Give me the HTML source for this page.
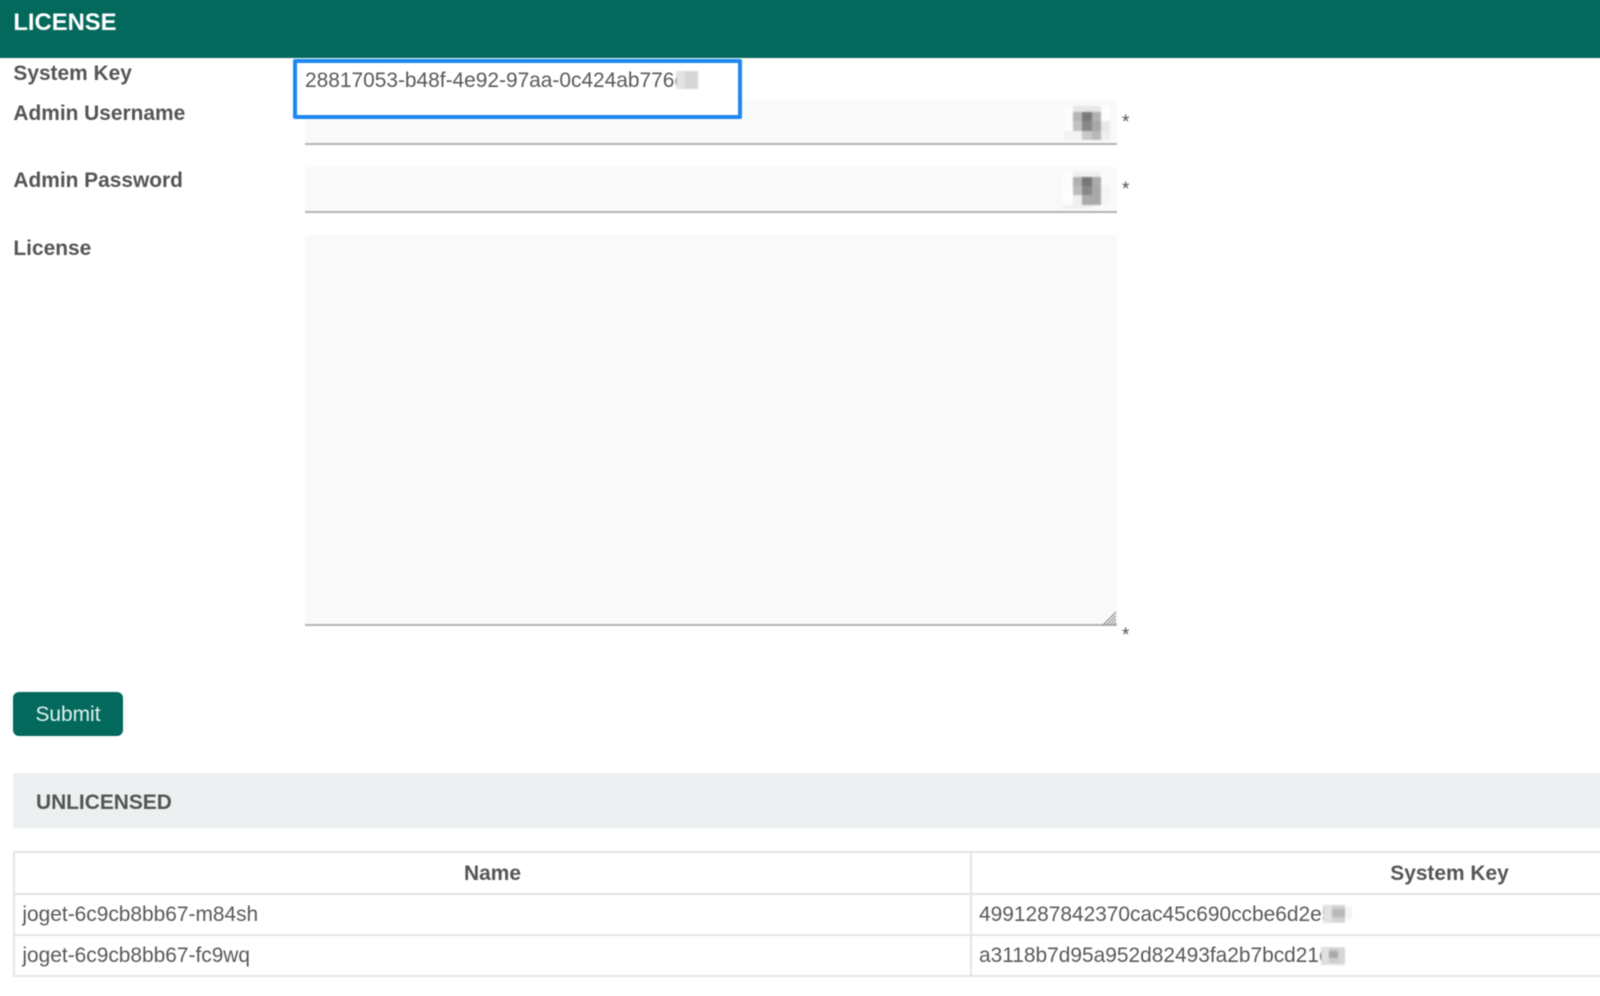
<!DOCTYPE html>
<html><head><meta charset="utf-8"><style>
html,body{margin:0;padding:0;background:#fff}
body{width:1600px;height:986px;position:relative;overflow:hidden;font-family:"Liberation Sans",sans-serif;color:#595959;font-size:20.9px}
#w{position:absolute;left:-10px;top:-10px;width:1620px;height:1006px;filter:blur(.45px)}
#n{position:absolute;left:10px;top:10px;width:1600px;height:986px}
.a{position:absolute;white-space:nowrap}
.l{left:13.4px;font-weight:bold;line-height:24px;color:#555}
.i{position:absolute;left:305px;width:812px;background:#f9f9f9;border-bottom:2px solid #b4b4b4}
.p{position:absolute}
.t{text-align:center;font-weight:bold;color:#555}
.line{position:absolute;background:#e4e4e4}
svg.m{position:absolute;filter:blur(.7px)}
</style></head><body><div id="w"><div id="n">
<div class="a" style="left:-10px;top:-10px;width:1620px;height:68px;background:#03695c"></div>
<div class="a" style="left:13.4px;top:10px;color:#fff;font-weight:bold;font-size:23.8px;line-height:26px">LICENSE</div>
<div class="a l" style="top:62px">System Key</div>
<div class="a l" style="top:102px">Admin Username</div>
<div class="a l" style="top:169px">Admin Password</div>
<div class="a l" style="top:237px">License</div>

<div class="i" style="top:100px;height:43px"></div>
<div class="i" style="top:167px;height:44px"></div>
<div class="i" style="top:235px;height:389px"></div>
<svg class="p" style="left:1102px;top:611px" width="15" height="15"><path d="M14 1L1 14M14 4.5L4.5 14M14 8L8 14M14 11.5L11.5 14" stroke="#888" stroke-width="1.2" fill="none"/></svg>

<svg class="m" style="left:1060px;top:100px" width="56" height="44">
<rect x="4" y="6" width="46" height="34" fill="#fdfdfd"/>
<rect x="13" y="6" width="28" height="6" fill="#e6e6e6"/>
<rect x="13" y="12" width="9" height="9" fill="#b5b5b5"/><rect x="22" y="12" width="10" height="9" fill="#7a7a7a"/><rect x="32" y="12" width="9" height="9" fill="#b0b0b0"/>
<rect x="13" y="21" width="9" height="10" fill="#c0c0c0"/><rect x="22" y="21" width="10" height="10" fill="#888"/><rect x="32" y="21" width="9" height="10" fill="#a8a8a8"/><rect x="41" y="21" width="9" height="10" fill="#e8e8e8"/>
<rect x="4" y="31" width="18" height="9" fill="#f3f3f3"/><rect x="22" y="31" width="10" height="9" fill="#c8c8c8"/><rect x="32" y="31" width="9" height="9" fill="#b8b8b8"/><rect x="41" y="31" width="9" height="9" fill="#eee"/>
</svg>
<svg class="m" style="left:1060px;top:167px" width="56" height="44">
<rect x="3" y="5" width="40" height="36" fill="#fdfdfd"/>
<rect x="13" y="5" width="28" height="5" fill="#f0f0f0"/>
<rect x="13" y="10" width="9" height="9" fill="#b0b0b0"/><rect x="22" y="10" width="10" height="9" fill="#777"/><rect x="32" y="10" width="9" height="9" fill="#aaa"/>
<rect x="13" y="19" width="9" height="9" fill="#bbb"/><rect x="22" y="19" width="10" height="9" fill="#888"/><rect x="32" y="19" width="9" height="9" fill="#a8a8a8"/>
<rect x="13" y="28" width="9" height="10" fill="#eee"/><rect x="22" y="28" width="19" height="10" fill="#aaa"/>
<rect x="41" y="19" width="9" height="19" fill="#f5f5f5"/>
<rect x="3" y="38" width="30" height="3" fill="#f0f0f0"/>
</svg>

<div class="a" style="left:1122px;top:113px;font-size:19px;line-height:20px;color:#555">*</div>
<div class="a" style="left:1122px;top:180px;font-size:19px;line-height:20px;color:#555">*</div>
<div class="a" style="left:1122px;top:626px;font-size:19px;line-height:20px;color:#555">*</div>

<div class="p" style="left:293px;top:59px;width:441px;height:52px;border:4px solid #1e88f0;border-radius:2px;background:#fff"></div>
<div class="a" style="left:305px;top:69px;line-height:24px">28817053-b48f-4e92-97aa-0c424ab776e</div>
<svg class="m" style="left:672px;top:66px" width="36" height="30">
<rect x="4" y="5" width="22" height="18" fill="#e2e2e2"/><rect x="13" y="5" width="13" height="18" fill="#d6d6d6"/></svg>

<div class="p" style="left:13px;top:692px;width:110px;height:44px;background:#03695c;border-radius:6px"></div>
<div class="a" style="left:13px;top:693px;width:110px;text-align:center;line-height:44px;color:#dff3ee">Submit</div>

<div class="p" style="left:13px;top:773px;width:1600px;height:55px;background:#ecf0f1"></div>
<div class="a" style="left:36px;top:791px;font-weight:bold;line-height:24px;color:#555">UNLICENSED</div>

<div class="line" style="left:13px;top:851px;width:1600px;height:2px"></div>
<div class="line" style="left:13px;top:893px;width:1600px;height:2px"></div>
<div class="line" style="left:13px;top:934px;width:1600px;height:2px"></div>
<div class="line" style="left:13px;top:975px;width:1600px;height:2px"></div>
<div class="line" style="left:13px;top:851px;width:2px;height:126px"></div>
<div class="line" style="left:970px;top:851px;width:2px;height:126px"></div>

<div class="a t" style="left:15px;top:862px;width:955px;line-height:24px">Name</div>
<div class="a t" style="left:973px;top:862px;width:953px;line-height:24px">System Key</div>
<div class="a" style="left:22.4px;top:903px;line-height:24px">joget-6c9cb8bb67-m84sh</div>
<div class="a" style="left:22.4px;top:944px;line-height:24px">joget-6c9cb8bb67-fc9wq</div>
<div class="a" style="left:979px;top:903px;line-height:24px">4991287842370cac45c690ccbe6d2e5</div>
<div class="a" style="left:979px;top:944px;line-height:24px">a3118b7d95a952d82493fa2b7bcd21c</div>
<svg class="m" style="left:1318px;top:900px" width="36" height="30">
<rect x="5" y="5" width="22" height="18" fill="#e2e2e2"/><rect x="14" y="5" width="13" height="17" fill="#d2d2d2"/><rect x="14" y="9" width="13" height="8" fill="#b8b8b8"/><rect x="27" y="7" width="7" height="12" fill="#f4f4f4"/></svg>
<svg class="m" style="left:1318px;top:942px" width="36" height="28">
<rect x="3" y="5" width="24" height="18" fill="#e0e0e0"/><rect x="11" y="6" width="9" height="15" fill="#cdcdcd"/><rect x="11" y="9" width="9" height="7" fill="#a8a8a8"/><rect x="20" y="6" width="7" height="16" fill="#d6d6d6"/></svg>
</div></div></body></html>
